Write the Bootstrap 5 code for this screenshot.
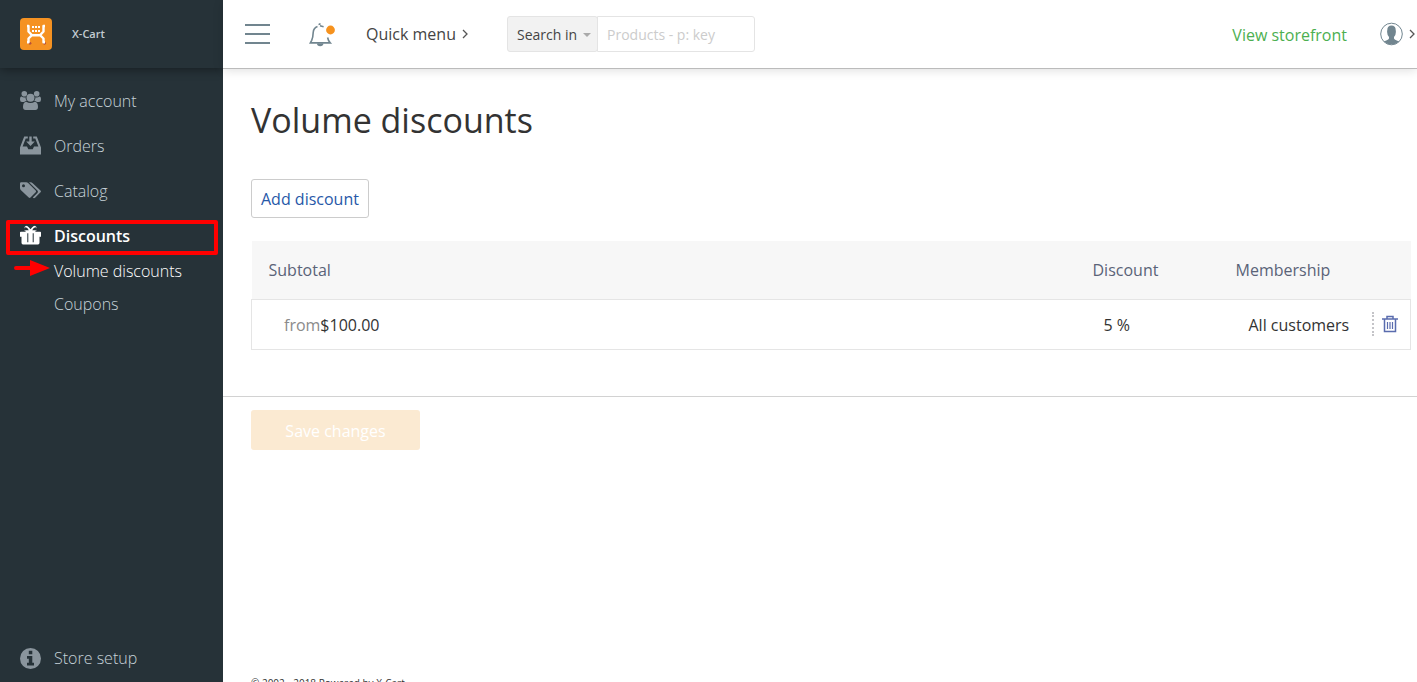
<!DOCTYPE html>
<html lang="en">
<head>
<meta charset="utf-8">
<meta name="viewport" content="width=device-width, initial-scale=1">
<title>Volume discounts</title>
<link href="https://cdn.jsdelivr.net/npm/bootstrap@5.3.0/dist/css/bootstrap.min.css" rel="stylesheet">
<style>
  body { font-family: "Open Sans", sans-serif; font-size: 16px; line-height: 24px; color: #333; font-weight: 300; background: #fff; }
  a { text-decoration: none; }
  .side { width: 223px; background: #263238; }
  .brand-bar, .top-bar { height: 68px; }
  .brand-bar { box-shadow: 0 1px 10px rgba(0,0,0,.45); padding-left: 20px; gap: 20px; }
  .brand-bar a { font-size: 11px; font-weight: 600; color: #c3ccd1; }
  .menu { padding-top: 10px; }
  .menu a { color: #c7d2d8; height: 45px; padding-left: 20px; gap: 13px; }
  .menu svg, .side-foot svg { width: 21px; height: 21px; fill: #8a959d; }
  .menu a.current { color: #fff; font-weight: 600; }
  .menu a.current svg { fill: #fff; }
  .menu .sub-menu { margin-top: -4px; }
  .menu .sub-menu a { height: 33px; padding-left: 54px; }
  .menu .sub-menu a.chosen { color: #fff; }
  .marked::after { content: ""; position: absolute; inset: 7px 5px 3px 6px; border: 4px solid #f00; border-radius: 2px; pointer-events: none; }
  .menu .pointer { position: absolute; left: 14px; top: 5px; width: 36px; height: 18px; fill: #f00; }
  .side-foot { color: #c7d2d8; height: 48px; padding-left: 20px; gap: 13px; }
  .top-bar { box-shadow: 0 1px 0 #bbb, 0 2px 10px rgba(0,0,0,.14); padding-left: 22px; z-index: 1; }
  .icon-btn { background: none; border: 0; padding: 0; display: flex; align-items: center; color: #333; }
  .menu-btn { margin-right: 39px; }
  .bell-btn { margin-right: 30px; }
  .quick { font-weight: 400; color: #444; gap: 6px; width: 141px; }
  .search { width: 248px; height: 36px; }
  .search .btn { background: #f2f2f2; border: 1px solid #e4e4e4; width: 91px; padding: 0 0 0 9px; font-size: 14px; font-weight: 500; color: #444; gap: 6px; border-radius: 3px; }
  .search .btn::after { margin: 2px 0 0; border-top-width: 4px; border-left-width: 4px; border-right-width: 4px; color: #aaa; }
  .search .form-control { border-color: #e4e4e4; font-size: 14px; padding: 0 9px; border-radius: 3px; }
  .search .form-control::placeholder { color: #ccc; }
  .storefront { color: #4caf50; font-weight: 400; margin-right: 33px; padding-top: 2px; }
  .user-btn { gap: 6px; margin-right: 1px; }
  .page { min-height: calc(100vh - 60px); }
  .page-body { padding: 26px 6px 46px 28px; }
  h1 { font-size: 34px; line-height: 52px; font-weight: 400; color: #333; margin: 0 0 33px; }
  .add-btn { height: 39px; padding: 0 9px; border: 1px solid #ccc; border-radius: 3px; color: #2758a8; background: #fff; font-size: 16px; }
  .grid-table { margin: 23px 0 0; table-layout: fixed; width: 100%; border-collapse: collapse; }
  .grid-table th { background: #f7f7f7; color: #5a6378; font-weight: 400; height: 58px; padding: 0 0 0 17px; }
  .grid-table td { height: 50px; padding: 2px 0 0 32px; font-weight: 400; }
  .grid-table tbody tr { border: 1px solid #e5e5e5; }
  .grid-table th.c-disc { width: 161px; padding-left: 18px; }
  .grid-table td.c-disc { padding-left: 29px; }
  .grid-table th.c-member { width: 136px; padding-left: 0; }
  .grid-table td.c-member { padding-left: 13px; white-space: nowrap; }
  .grid-table th.c-del { width: 39px; }
  .grid-table td.c-del { padding: 0; }
  .from { color: #8b8b8b; }
  .trash { border: 0; border-left: 2px dotted #c4c4c8; background: none; padding: 0 0 0 8px; height: 24px; display: flex; align-items: center; }
  .save-row { border-top: 1px solid #d2d2d2; padding: 13px 28px; }
  .save-btn, .save-btn:disabled { width: 169px; height: 40px; background: #fbead2; border: 0; border-radius: 3px; color: #fff; font-size: 16px; font-weight: 500; opacity: 1; padding: 2px 0 0; }
  .copy { font-size: 10px; line-height: 14px; font-weight: 400; padding-left: 28px; }
</style>
</head>
<body>
<div class="d-flex vh-100 overflow-hidden">
  <aside class="side d-flex flex-column flex-shrink-0 overflow-hidden">
    <div class="brand-bar d-flex align-items-center flex-shrink-0">
      <svg width="32" height="32" viewBox="0 0 32 32" aria-hidden="true"><rect width="32" height="32" rx="4" fill="#f59222"/><circle cx="10" cy="25.300" r="1.400" fill="#b5503a"/><circle cx="24.500" cy="25.300" r="1.400" fill="#b5503a"/><path d="M7 8h1.500v5.500L12 17.200h8l3.500-3.700V8H25M12 17.200l-3.500 3.300v3.800H7M20 17.200l3.500 3.300v3.800H25" fill="none" stroke="#fff" stroke-width="2.400" stroke-linejoin="round"/><path d="M12 9h8M12 13h8" stroke="#fff" stroke-width="2" stroke-dasharray="2 1"/></svg>
      <a href="#">X-Cart</a>
    </div>
    <nav class="menu flex-grow-1">
      <a href="#" class="d-flex align-items-center"><svg viewBox="0 0 21 21"><circle cx="4.300" cy="3.800" r="2.800"/><circle cx="16.700" cy="3.800" r="2.800"/><circle cx="10.500" cy="7.800" r="4"/><path d="M0 9.500q0-3 1.500-3 2 1.300 4 .8 0 2.200 1.200 3.700-1.500 0-2.600 1H2Q0 12 0 9.500zM21 9.500q0-3-1.500-3-2 1.300-4 .8 0 2.200-1.200 3.700 1.500 0 2.600 1H19Q21 12 21 9.500zM3 17q0-5 3.200-5.200 4.300 2.600 8.600 0Q18 12 18 17q0 3-2.700 3H5.700Q3 20 3 17z"/></svg>My account</a>
      <a href="#" class="d-flex align-items-center"><svg viewBox="0 0 21 21"><path d="M0 19.500v-7L4.200 1.500h3.600v2H5.700L2.600 11.500H7l1.300 2.700h4.400l1.300-2.700h4.400L15.300 3.500h-2.100v-2h3.600L21 12.500v7H0zM9.300 1.500h2.400v5h3.100l-4.300 4.600-4.300-4.600h3.100z"/></svg>Orders</a>
      <a href="#" class="d-flex align-items-center"><svg viewBox="0 0 21 21"><path fill-rule="evenodd" d="M0 3.500Q0 2.300 1.200 2.300h5q1.200 0 2.200.9l7.300 7.300q.9.900 0 1.800l-5.200 5.200q-.9.900-1.800 0L1 10.200Q0 9.200 0 8zM3.500 7.200a1.500 1.500 0 1 0 0-3 1.500 1.500 0 0 0 0 3z"/><path d="M9 2.300h1.500q1.200 0 2.200.9l7.800 7.300q.9.900 0 1.800l-5.400 5.400q-1.200 1-2.300-.2l4.600-4.600q1-1.300 0-2.400z"/></svg>Catalog</a>
      <a href="#" class="d-flex align-items-center position-relative marked current"><svg viewBox="0 0 21 21"><path fill-rule="evenodd" d="M0 7.500q0-.8.800-.8H6A3.200 3.200 0 0 1 6 .8q1.800 0 3 1.600l1.500 1.900L12 2.400Q13.200.8 15 .8a3.200 3.200 0 0 1 0 5.900h5.200q.8 0 .8.800v4.300h-1.500v6q0 1.700-1.500 1.700H3q-1.500 0-1.500-1.700v-6H0zM6 2.400a1.500 1.500 0 1 0 0 2.900h2.800L7.500 3.200Q6.900 2.400 6 2.400zM15 2.400q-.9 0-1.500.8l-1.300 2.100H15a1.500 1.500 0 1 0 0-2.900zM7.300 8.200v9h1v-9zM12.700 8.200v9h1v-9z"/></svg>Discounts</a>
      <div class="sub-menu">
        <div class="position-relative">
          <svg class="pointer" viewBox="0 0 36 18" aria-hidden="true"><path d="M2 7h14V1l20 8-20 8v-6H2a2 2 0 0 1 0-4z"/></svg>
          <a href="#" class="d-flex align-items-center chosen">Volume discounts</a>
        </div>
        <a href="#" class="d-flex align-items-center">Coupons</a>
      </div>
    </nav>
    <a href="#" class="side-foot d-flex align-items-center flex-shrink-0"><svg viewBox="0 0 21 21"><path fill-rule="evenodd" d="M10.500 0a10.500 10.500 0 1 0 0 21 10.500 10.500 0 0 0 0-21zM8.800 2.800h3.500v3.400H8.800zM7 8h5.300v6.700H14v2.800H7v-2.800h1.800v-4H7z"/></svg>Store setup</a>
  </aside>

  <div class="flex-grow-1 d-flex flex-column" style="min-width:0">
    <header class="top-bar d-flex align-items-center flex-shrink-0 position-relative">
      <button class="icon-btn menu-btn" type="button" aria-label="Menu"><svg width="25" height="22" viewBox="0 0 25 22" stroke="#71858f" stroke-width="2"><path d="M0 2h25M0 11h25M0 20h25"/></svg></button>
      <button class="icon-btn bell-btn" type="button" aria-label="Notifications"><svg width="27" height="26" viewBox="0 0 27 26" fill="none" stroke="#71858f" stroke-width="1.600"><path d="M8.500 5.600Q4.500 7 4.200 11.500 4 16.500 2.700 19.300L1.300 21.900h19.900Q19.300 20 18.600 16.500M9.500 3.600l1.300-.4V2.200M11 4.800l3.600.9"/><path d="M8.800 22.500q0 2 2.400 2t2.400-2" fill="#71858f"/><circle cx="21.500" cy="9" r="4.400" fill="#f6921e" stroke="none"/></svg></button>
      <button class="icon-btn quick" type="button">Quick menu <svg width="7" height="10" viewBox="0 0 7 10" fill="none" stroke="#555" stroke-width="1.300"><path d="M1 1l4 4-4 4"/></svg></button>
      <form class="input-group flex-nowrap search">
        <button class="btn dropdown-toggle d-flex align-items-center" type="button">Search in</button>
        <input class="form-control" type="text" placeholder="Products - p: key" aria-label="Search">
      </form>
      <a href="#" class="storefront ms-auto">View storefront</a>
      <button class="icon-btn user-btn" type="button" aria-label="Account"><svg width="23" height="24" viewBox="0 0 23 24"><defs><clipPath id="face"><circle cx="11.500" cy="12" r="10.500"/></clipPath></defs><g clip-path="url(#face)" fill="#71858f"><path d="M7.300 8q0-4.500 4.200-4.500T15.700 8q.8 4-1.700 7v1.500q.5 1.300 5.500 3V24h-16v-4.500q5-1.700 5.500-3V15q-2.500-3-1.700-7z"/></g><circle cx="11.500" cy="12" r="10.800" fill="none" stroke="#71858f" stroke-width="1"/></svg><svg width="7" height="10" viewBox="0 0 7 10" fill="none" stroke="#555" stroke-width="1.300"><path d="M1 1l4 4-4 4"/></svg></button>
    </header>

    <div class="page d-flex flex-column flex-shrink-0">
      <main>
        <div class="page-body">
          <h1>Volume discounts</h1>
          <button class="add-btn d-block" type="button">Add discount</button>
          <table class="grid-table">
            <thead><tr><th>Subtotal</th><th class="c-disc">Discount</th><th class="c-member">Membership</th><th class="c-del" aria-label="Remove"></th></tr></thead>
            <tbody><tr>
              <td><span class="from">from</span>$100.00</td>
              <td class="c-disc">5 %</td>
              <td class="c-member">All customers</td>
              <td class="c-del"><button class="trash" type="button" aria-label="Delete"><svg width="16" height="18" viewBox="0 0 16 18" fill="none" stroke="#5a6cae" stroke-width="1.500"><path d="M0 4h16M5 4V1.500h6V4M2.500 4v12.500h11V4"/><path d="M5.500 7v7M8 7v7M10.500 7v7" stroke-width="1.200"/></svg></button></td>
            </tr></tbody>
          </table>
        </div>
        <div class="save-row"><button class="save-btn" type="button" disabled>Save changes</button></div>
      </main>
      <footer class="copy mt-auto">© 2002 - 2018 Powered by X-Cart</footer>
    </div>
  </div>
</div>
<script src="https://cdn.jsdelivr.net/npm/bootstrap@5.3.0/dist/js/bootstrap.bundle.min.js"></script>
</body>
</html>
